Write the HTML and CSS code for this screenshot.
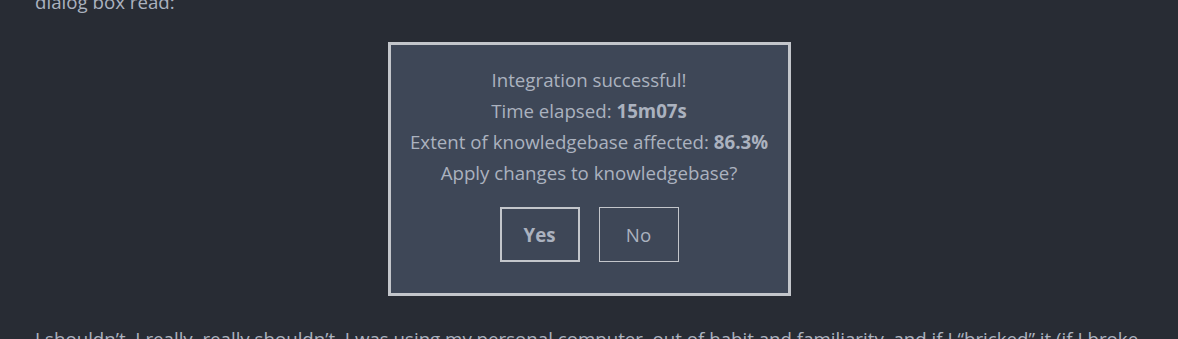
FILE: index.html
```html
<!DOCTYPE html>
<html>
<head>
  <title>Integration</title>
  <link rel="stylesheet" href="styles.css">
</head>
<body>
  <div class="story">
    <p class="lead-in">dialog box read:</p>
    <div class="dialog">
      <p class="dialog-line">Integration successful!</p>
      <p class="dialog-line">Time elapsed: <b>15m07s</b></p>
      <p class="dialog-line">Extent of knowledgebase affected: <b>86.3%</b></p>
      <p class="dialog-line">Apply changes to knowledgebase?</p>
      <div class="dialog-buttons">
        <button class="btn btn-default">Yes</button>
        <button class="btn">No</button>
      </div>
    </div>
    <p>I shouldn&rsquo;t. I really, really shouldn&rsquo;t. I was using my personal computer, out of habit and familiarity, and if I &ldquo;bricked&rdquo; it (if I broke it beyond repair, that is) I would lose everything I had ever written.</p>
  </div>
</body>
</html>
```
FILE: styles.css
```css
html, body {
  margin: 0;
  background: #282c34;
}

body {
  color: #abb2bf;
  font-family: "Open Sans", sans-serif;
  font-size: 18.7px;
  line-height: 31px;
}

.story {
  padding: 0 35px;
}

.story p {
  margin: 25px 0;
}

.story .lead-in {
  margin-top: -14px;
}

.story .dialog + p {
  margin-top: 27px;
}

.dialog {
  box-sizing: border-box;
  width: 403px;
  margin: 25px auto;
  padding: 19px 8px 31px;
  background: #3e4757;
  border: 3px solid #c3c6cb;
  text-align: center;
}

.dialog .dialog-line {
  margin: 0;
}

.dialog b {
  font-weight: 700;
}

.dialog-buttons {
  display: flex;
  justify-content: center;
  gap: 19px;
  margin-top: 19px;
}

.btn {
  box-sizing: border-box;
  width: 80px;
  height: 55px;
  padding: 0;
  background: transparent;
  border: 1px solid #c3c6cb;
  color: #abb2bf;
  font-family: "Open Sans", sans-serif;
  font-size: 18.7px;
}

.btn-default {
  border-width: 2px;
  font-weight: 700;
}
```
